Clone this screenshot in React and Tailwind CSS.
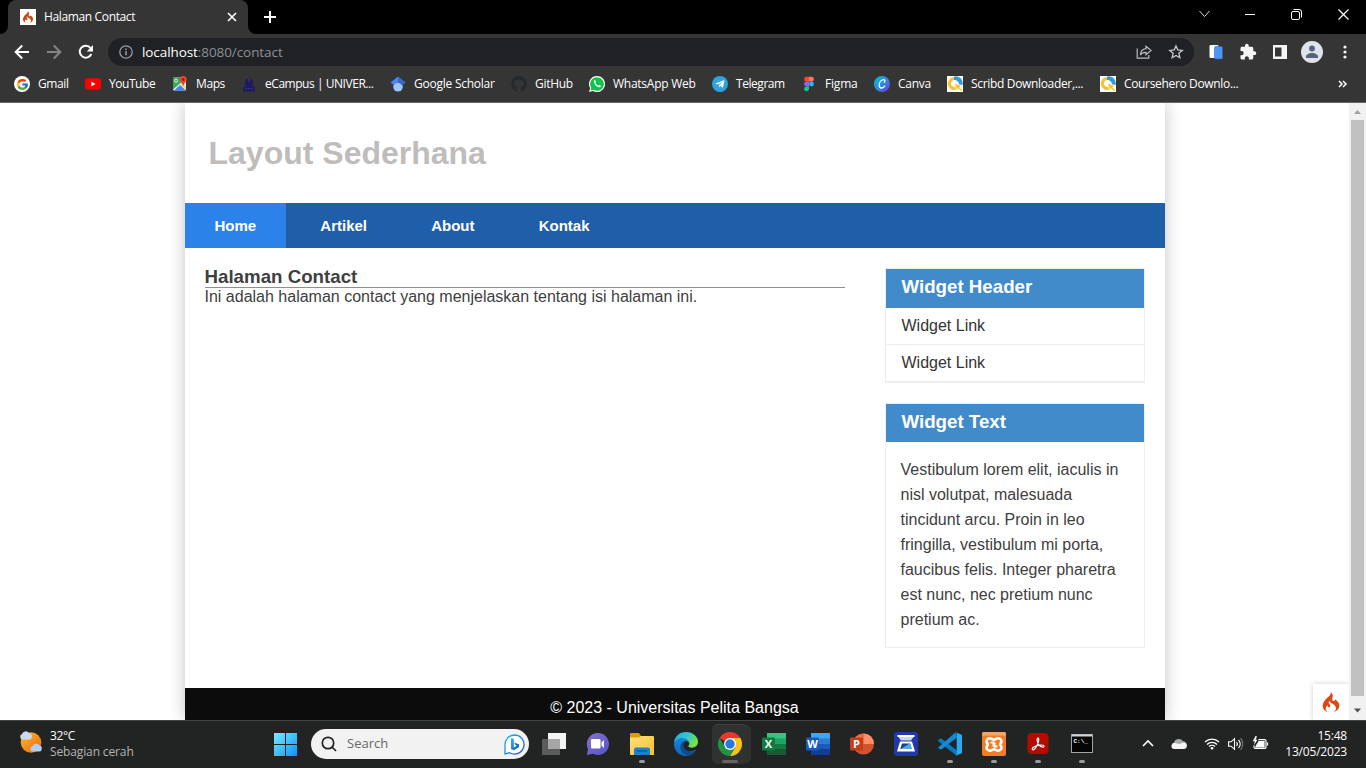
import React from "react";
import { FcGoogle } from "react-icons/fc";
import { FaGithub, FaTelegramPlane } from "react-icons/fa";
import { SiCodeigniter } from "react-icons/si";
import { MdExtension } from "react-icons/md";

const ui = "font-['Open_Sans','Noto_Sans',sans-serif]";
const arial = "font-['Liberation_Sans',Arial,sans-serif]";

const YouTube = () => (
  <svg width="16" height="16" viewBox="0 0 16 16"><rect y="2.2" width="16" height="11.6" rx="3" fill="#f00" /><path d="M6.3 5.6v4.8l4.2-2.4z" fill="#fff" /></svg>
);
const Maps = () => (
  <svg width="16" height="16" viewBox="0 0 16 16">
    <rect x="1" y="1.5" width="13" height="13" rx="1" fill="#e8eaed" />
    <path d="M1 2.5a1 1 0 0 1 1-1h7v5L1 13.500z" fill="#34a853" />
    <path d="M2 14.500 8 9l6 5.500z" fill="#4285f4" />
    <path d="m8 8 2-1.500L14 11v2.500z" fill="#fbd85d" />
    <circle cx="4" cy="4.700" r="1.500" fill="none" stroke="#e6f4ea" />
    <path d="M11.200 0a3.500 3.500 0 0 0-3.500 3.500c0 2.500 2.800 3.400 3.500 7 .7-3.600 3.500-4.500 3.500-7A3.500 3.500 0 0 0 11.200 0z" fill="#ea4335" />
    <circle cx="11.200" cy="3.500" r="1.200" fill="#7a1f16" />
  </svg>
);
const Campus = () => (
  <svg width="16" height="16" viewBox="0 0 16 16">
    <path d="M8 1.500 12 4.500v5l1.500 1.500.5 4.500H2L2.500 11 4 9.500v-5z" fill="#1d1c5c" />
    <path d="M5 6.500h6M4.500 9.500h7M3.500 12.500h9" stroke="#2b2b80" />
    <circle cx="8" cy="8" r="2.200" fill="none" stroke="#14144c" />
    <path d="M8 2.500v3" stroke="#8c2a3a" strokeWidth="1.300" />
  </svg>
);
const Scholar = () => (
  <svg width="16" height="16" viewBox="0 0 16 16">
    <circle cx="8" cy="10.800" r="4.800" fill="#a0c3ff" />
    <path d="M8 .5.500 6.500 4 9.300a4.500 4.500 0 0 1 8 0l3.500-2.800z" fill="#4f86e8" />
    <path d="M8 .5v6.300a4.500 4.500 0 0 1 4 2.500l3.500-2.800z" fill="#3667c9" />
  </svg>
);
const Figma = () => (
  <svg width="16" height="16" viewBox="0 0 16 16">
    <path d="M5.500.8H8v4.800H5.500a2.400 2.400 0 0 1 0-4.800z" fill="#f24e1e" />
    <path d="M8 .8h2.500a2.400 2.400 0 0 1 0 4.800H8z" fill="#ff7262" />
    <path d="M5.500 5.600H8v4.800H5.500a2.400 2.400 0 0 1 0-4.800z" fill="#a259ff" />
    <circle cx="10.500" cy="8" r="2.400" fill="#1abcfe" />
    <path d="M5.500 10.400H8v2.400a2.450 2.450 0 1 1-2.500-2.400z" fill="#0acf83" />
  </svg>
);
const Canva = () => (
  <svg width="16" height="16" viewBox="0 0 16 16">
    <defs><linearGradient id="cv" x1="0" y1="0" x2="1" y2="1"><stop offset="0" stopColor="#00c4cc" /><stop offset=".5" stopColor="#2a8fdc" /><stop offset="1" stopColor="#7d2ae8" /></linearGradient></defs>
    <circle cx="8" cy="8" r="8" fill="url(#cv)" />
    <path d="M10.300 6.200c1.200-1 .6-2.600-.9-2.500C6.800 4 5.300 6.700 5.200 9c0 1.900 1 3.100 2.500 3 1.300 0 2.400-.9 3.100-2" fill="none" stroke="#fff" strokeWidth="1.300" strokeLinecap="round" />
  </svg>
);
const Down = () => (
  <svg width="16" height="16" viewBox="0 0 16 16">
    <path d="M0 0h16v16H0z" fill="#fff" />
    <path d="M7 2.500A5 5 0 1 0 9 12.200" fill="none" stroke="#fbc02d" strokeWidth="3" />
    <path d="M7 .5A7 7 0 0 1 15.500 9l-3.500-.500A4.500 4.500 0 0 0 7 4z" fill="#2f9be0" />
    <path d="m7.500 7 7.500 3-2.500 1.300 3 3-1.300 1.300-3-3L10 15z" fill="#fbc02d" stroke="#fff" strokeWidth=".6" />
  </svg>
);
const Gmail = () => <span className="flex size-4 items-center justify-center rounded-full bg-white"><FcGoogle size={13} /></span>;
const WhatsApp = () => (
  <svg width="16" height="16" viewBox="0 0 16 16">
    <path d="M8 0a8 8 0 0 0-6.800 12.200L0 16l4-1.100A8 8 0 1 0 8 0z" fill="#fff" />
    <path d="M8 1.200a6.800 6.800 0 0 0-5.700 10.600l-.7 2.600 2.700-.7A6.800 6.800 0 1 0 8 1.200z" fill="#0fc34b" />
    <path d="M5.600 4.100c-1.300.8-.8 2.700.4 4.300 1.500 2 3.700 3.500 5.100 2.700.8-.5.900-1.100.7-1.400L10.200 8.800l-.9.900C8 9.200 7 8.200 6.400 7l.6-.9-.7-1.900z" fill="#fff" />
  </svg>
);
const Telegram = () => <span className="flex size-4 items-center justify-center rounded-full bg-[#2ea3de] pr-px text-white"><FaTelegramPlane size={10} /></span>;
const GitHub = () => <FaGithub size={16} color="#24292e" />;

const bookmarks = [
  [Gmail, "Gmail", "w-[71px]", "tracking-[-0.4px]"],
  [YouTube, "YouTube", "w-[87px]", "tracking-[-0.45px]"],
  [Maps, "Maps", "w-[69px]", "tracking-[-0.4px]"],
  [Campus, "eCampus | UNIVER...", "w-[149px]", "tracking-[-0.46px]"],
  [Scholar, "Google Scholar", "w-[121px]", "tracking-[-0.24px]"],
  [GitHub, "GitHub", "w-[78px]", "tracking-[-0.3px]"],
  [WhatsApp, "WhatsApp Web", "w-[123px]", "tracking-[-0.26px]"],
  [Telegram, "Telegram", "w-[89px]", "tracking-[-0.45px]"],
  [Figma, "Figma", "w-[73px]", "tracking-[-0.2px]"],
  [Canva, "Canva", "w-[73px]", "tracking-[-0.3px]"],
  [Down, "Scribd Downloader,...", "w-[153px]", "tracking-[-0.33px]"],
  [Down, "Coursehero Downlo...", "w-[160px]", "tracking-[-0.34px]"],
];

function Browser() {
  return (
    <header className={`${ui} text-[12px] text-white`}>
      <div className="flex h-[34px] bg-black">
        <div className="flex w-2 items-end bg-[#353535]"><div className="h-[34px] w-2 rounded-br-lg bg-black" /></div>
        <div className="h-[34px] bg-black">
          <div className="flex h-[34px] w-60 items-center rounded-t-lg bg-[#353535] pl-3">
            <span className="flex size-4 items-center justify-center bg-white"><SiCodeigniter size={12} color="#c9440f" /></span>
            <span className="ml-2 w-[182px] tracking-[-0.36px] whitespace-nowrap">Halaman Contact</span>
            <svg width="12" height="12" viewBox="0 0 12 12" stroke="#fff" strokeWidth="1.600"><path d="m2 2 8 8M10 2l-8 8" /></svg>
          </div>
        </div>
        <div className="w-2 bg-[#353535]"><div className="h-[34px] w-2 rounded-bl-lg bg-black" /></div>
        <svg className="mt-[10px] ml-[7px]" width="14" height="14" viewBox="0 0 14 14" stroke="#fff" strokeWidth="2"><path d="M7 1v12M1 7h12" /></svg>
        <div className="ml-auto flex h-7 items-center pr-[17px]">
          <svg className="mr-[35px]" width="12" height="12" viewBox="0 0 12 12" fill="none" stroke="#ddd"><path d="m1.500 3 5 5.500 5-5.500" /></svg>
          <svg className="mr-9" width="10" height="10" viewBox="0 0 10 10" stroke="#fff"><path d="M0 5.500h10" /></svg>
          <svg className="mr-9" width="11" height="11" viewBox="0 0 11 11" fill="none" stroke="#fff"><rect x=".5" y="2.500" width="8" height="8" rx="1.500" /><path d="M2.500.5h5.500a2.500 2.500 0 0 1 2.500 2.500v5.500" /></svg>
          <svg width="11" height="11" viewBox="0 0 11 11" stroke="#fff" strokeWidth="1.200"><path d="m.5.5 10 10M10.500.5l-10 10" /></svg>
        </div>
      </div>
      <div className="flex h-9 items-center bg-[#353535] pl-[14px]">
        <svg width="16" height="16" viewBox="0 0 16 16" fill="none" stroke="#fff" strokeWidth="2"><path d="M15 8H2M8.200 1.500 1.700 8l6.500 6.500" /></svg>
        <svg className="ml-4" width="16" height="16" viewBox="0 0 16 16" fill="none" stroke="#858585" strokeWidth="2"><path d="M1 8h13M7.800 1.500 14.300 8l-6.500 6.500" /></svg>
        <svg className="ml-4" width="16" height="16" viewBox="0 0 16 16" fill="none" stroke="#fff" strokeWidth="2"><path d="M13.300 10A6 6 0 1 1 12.500 4L14 5.800" /><path d="M15 1v6.500H8.800z" fill="#fff" stroke="none" /></svg>
        <div className="ml-[14px] flex h-7 w-[1086px] items-center rounded-full bg-[#202124] pl-[11px]">
          <svg width="14" height="14" viewBox="0 0 14 14" fill="none" stroke="#9aa0a6" strokeWidth="1.300"><circle cx="7" cy="7" r="6.200" /><path d="M7 6v4.300M7 3.500V5" strokeWidth="1.500" /></svg>
          <span className="ml-[9px] text-[13.5px] tracking-[-0.08px]">localhost<span className="text-[#8b9095]">:8080/contact</span></span>
          <svg className="ml-auto" width="16" height="16" viewBox="0 0 16 16" fill="none" stroke="#b9bcc0" strokeWidth="1.200"><path d="M1.200 4.500v9.700h11.600V11" /><path d="M10 2.200 15 6.500l-5 4.300V8.300C7.500 8.200 5.600 9 4.300 11c.3-3.200 2.200-6 5.700-6.400z" /></svg>
          <svg className="mr-[10px] ml-4" width="16" height="16" viewBox="0 0 16 16" fill="none" stroke="#c8cace" strokeWidth="1.300"><path d="m8 1.900 1.750 4.100 4.500.4-3.400 2.950 1 4.350L8 11.400l-3.850 2.300 1-4.350L1.750 6.400l4.500-.4z" /></svg>
        </div>
        <svg className="ml-[14px]" width="16" height="16" viewBox="0 0 16 16"><rect x="1.500" y="1" width="9" height="13" rx="1.300" fill="#fff" /><rect x="6.500" y="2.500" width="8" height="12.500" rx="1.300" fill="#4c97f5" stroke="#2a5ea8" strokeWidth=".5" /></svg>
        <MdExtension className="ml-[15px]" size={18} color="#f5f5f5" />
        <svg className="ml-4" width="14" height="14" viewBox="0 0 14 14"><path d="M0 0h14v14H0z" fill="#f5f5f5" /><path d="M2 2.500h6.500v9H2z" fill="#353535" /></svg>
        <svg className="ml-[14px]" width="22" height="22" viewBox="0 0 22 22"><circle cx="11" cy="11" r="11" fill="#dfe3ea" /><circle cx="11" cy="7.500" r="2.900" fill="#56627a" /><path d="M5 17v-1.500c0-2 3.500-3.500 6-3.500s6 1.500 6 3.500V17z" fill="#56627a" /></svg>
        <svg className="ml-5" width="4" height="14" viewBox="0 0 4 14" fill="#f5f5f5"><circle cx="2" cy="2" r="1.600" /><circle cx="2" cy="7" r="1.600" /><circle cx="2" cy="12" r="1.600" /></svg>
      </div>
      <div className="flex h-8 items-start bg-[#353535] pl-[14px]">
        {bookmarks.map(([Icon, label, w, t]) => (
          <div key={label} className={`flex h-7 shrink-0 items-center gap-2 whitespace-nowrap ${w}`}><Icon /><span className={t}>{label}</span></div>
        ))}
        <svg className="mt-[10px] ml-[78px]" width="10" height="8" viewBox="0 0 10 8" fill="none" stroke="#fff" strokeWidth="1.500"><path d="m1 1 3 3-3 3M5 1l3 3-3 3" /></svg>
      </div>
      <div className="h-px bg-[#666]" />
    </header>
  );
}

function Site() {
  return (
    <div className={`${arial} flex h-[617px] overflow-hidden bg-white text-[#404040]`}>
      <div className="flex flex-1 justify-start overflow-hidden pl-[184.5px]">
        <div className="flex h-full w-[980px] flex-col bg-white shadow-[0_0_16px_rgba(0,0,0,0.24)]">
          <h1 className="h-[100px] pt-8 pl-6 text-[32px] leading-[37px] font-bold text-[#bfbcbc]">Layout Sederhana</h1>
          <nav className="flex h-[45px] items-center gap-[4.17px] bg-[#1f5faa] text-[15px] leading-[17px] font-bold text-white">
            <a className="flex h-full items-center bg-[#2b83ea] px-[30px]">Home</a>
            <a className="px-[30px]">Artikel</a>
            <a className="px-[30px]">About</a>
            <a className="px-[30px]">Kontak</a>
          </nav>
          <div className="flex h-[440px] justify-between p-5">
            <main className="w-[640px]">
              <h3 className="-mt-[2px] h-[22px] border-b border-[#8f8f8f] text-[18.72px] leading-[21px] font-bold">Halaman Contact</h3>
              <p className="text-[16px] leading-[18px]">Ini adalah halaman contact yang menjelaskan tentang isi halaman ini.</p>
            </main>
            <aside className="flex w-[260px] flex-col gap-5">
              <section className="border border-[#eee]">
                <h3 className="h-[39px] bg-[#428bca] pl-4 text-[18.72px] leading-[36px] font-bold text-white">Widget Header</h3>
                <div className="h-[37px] border-b border-[#eee] pl-4 leading-[35px] text-[#333]">Widget Link</div>
                <div className="h-[37px] border-b border-[#eee] pl-4 leading-[35px] text-[#333]">Widget Link</div>
              </section>
              <section className="border border-[#eee]">
                <h3 className="h-[38px] bg-[#428bca] pl-4 text-[18.72px] leading-[36px] font-bold text-white">Widget Text</h3>
                <p className="p-[15px] leading-[25px]">Vestibulum lorem elit, iaculis in nisl volutpat, malesuada tincidunt arcu. Proin in leo fringilla, vestibulum mi porta, faucibus felis. Integer pharetra est nunc, nec pretium nunc pretium ac.</p>
              </section>
            </aside>
          </div>
          <footer className="h-8 bg-[#0c0c0c] pt-[11px] text-center leading-[18px] text-white">© 2023 - Universitas Pelita Bangsa</footer>
        </div>
        <div className="mt-auto ml-auto flex size-9 shrink-0 items-center justify-center bg-white shadow-[0_0_5px_rgba(0,0,0,0.2)]"><SiCodeigniter size={20} color="#dd4814" /></div>
      </div>
      <div className="flex w-[17px] flex-col items-center bg-[#f1f1f1]">
        <svg width="17" height="17" viewBox="0 0 17 17"><path d="M5 11h7L8.500 7z" fill="#a3a3a3" /></svg>
        <div className="h-[576px] w-[13px] bg-[#c1c1c1]" />
        <svg className="mt-[6px]" width="17" height="17" viewBox="0 0 17 17"><path d="M5 6.500h7l-3.500 4z" fill="#505050" /></svg>
      </div>
    </div>
  );
}

const Folder = () => (
  <svg width="24" height="24" viewBox="0 0 24 24"><defs><linearGradient id="fo" x1="0" y1="0" x2="1" y2="1"><stop offset="0" stopColor="#ffe082" /><stop offset="1" stopColor="#fbbf24" /></linearGradient></defs><path d="M0 2a1 1 0 0 1 1-1h8l2 3h12v6H0z" fill="#dd9b08" /><path d="M0 5.500h9L11 4h12a1 1 0 0 1 1 1v18H1a1 1 0 0 1-1-1z" fill="url(#fo)" /><path d="M4 23v-5.500a2 2 0 0 1 2-2h12a2 2 0 0 1 2 2V23z" fill="#1583cf" /><path d="M7 19h10" stroke="#0b5a99" strokeWidth="1.500" /></svg>
);
const Edge = () => (
  <svg width="24" height="24" viewBox="0 0 24 24"><defs><linearGradient id="e1" x1="0" y1="0" x2="1" y2=".5"><stop offset="0" stopColor="#28a6e5" /><stop offset=".55" stopColor="#36c6d0" /><stop offset="1" stopColor="#72e63f" /></linearGradient><linearGradient id="e2" x1="0" y1="0" x2="0" y2="1"><stop offset="0" stopColor="#1588d9" /><stop offset="1" stopColor="#0d65bc" /></linearGradient></defs><path d="M0 12C0 4.500 5.500 0 12 0c7 0 12 4.800 12 9.600 0 4-2.900 6.200-6 6.200-2.300 0-3.700-.8-3.700-1.700 0-.7 1-.8 1-2.600 0-2-2.400-4.500-6.200-4.500C4.500 7 0 9 0 12z" fill="url(#e1)" /><path d="M0 12c.3-3.600 4-6 7.800-6 4.800 0 7.500 2.800 7.500 5.500-.7-1.600-2-2.400-3.500-2.400-3 0-3.800 2.700-3.800 4.600 0 4.800 5 7 10 5.600l4-1.500C20 22 16 24 12 24 5 24 0 18.500 0 12z" fill="url(#e2)" /><path d="M11.800 9c-5 0-6.800 6-4.300 10 1.600 2.800 3.900 4.500 6.700 4.800 3-.3 6-2.300 7.800-5.400C16 21 9.500 18.500 9.500 13c0-1.500.8-3.200 2.300-4z" fill="#104b91" /></svg>
);
const Chrome = () => (
  <svg width="24" height="24" viewBox="0 0 24 24"><path d="M12 12 1.600 6A12 12 0 0 1 22.400 6z" fill="#e33b2e" /><path d="M12 12V6h10.400A12 12 0 0 1 12 24l5.200-9z" fill="#fbc116" /><path d="M12 12 6.800 15 1.600 6A12 12 0 0 0 12 24l5.200-9z" fill="#229342" /><circle cx="12" cy="12" r="6" fill="#fff" /><circle cx="12" cy="12" r="4.700" fill="#2877e8" /></svg>
);
const Office = ({ a, b, c, d, e, letter, round }) => (
  <svg width="24" height="24" viewBox="0 0 24 24">
    {round ? <><circle cx="13.500" cy="12" r="10.500" fill={d} /><path d="M13.500 1.500A10.500 10.500 0 0 1 24 12H13.500z" fill={a} /><path d="M13.500 1.500A10.500 10.500 0 0 0 3 12h10.500z" fill={b} /></> : <><path d="M5 1h19v6H5z" fill={a} /><path d="M5 6.500h19V12H5z" fill={b} /><path d="M5 12h19v5.500H5z" fill={c} /><path d="M5 17.500h19V23H5z" fill={d} /></>}
    <rect x="0" y="5.500" width="13" height="13" rx="1" fill={e} /><text x="6.500" y="16" textAnchor="middle" fontSize="11" fontWeight="700" fontFamily="Open Sans, sans-serif" fill="#fff">{letter}</text>
  </svg>
);
const Scanner = () => (
  <svg width="24" height="24" viewBox="0 0 24 24"><rect width="24" height="24" rx="3" fill="#2138aa" /><path d="M3.500 3.500h17l-3.500 5H7z" fill="#c9d4f0" /><path d="M3.500 3h17v2h-17z" fill="#fff" /><path d="M6 9.500h12l3 10H3z" fill="#fff" /><path d="M8 11.500h8l1.800 5.500H6.200z" fill="#1d3e94" /><path d="m6.500 17 9.300-5.500 2 5.500z" fill="#55a8e8" /></svg>
);
const Code = () => (
  <svg width="24" height="24" viewBox="0 0 24 24"><path d="M0 8.200 1.700 6.700l2 .1L19 18.500V24L1.200 9.900z" fill="#0879c4" /><path d="M0 15.800 17.500.3 19 5.500 3.700 17.200l-2 .1z" fill="#118bd4" /><path d="M17.500 0 24 3v18l-6.500 3c.9-.2 1.200-.8 1.200-1.500v-21c0-.8-.4-1.300-1.200-1.500z" fill="#29aaf2" /></svg>
);
const Xampp = () => (
  <svg width="24" height="24" viewBox="0 0 24 24"><rect width="24" height="24" rx="2" fill="#f47c24" /><path d="M0 2a2 2 0 0 1 2-2h20a2 2 0 0 1 2 2v1.500H0z" fill="#f9a564" /><path d="M8 6.300c2 0 2.600 1.500 4 1.500s2-1.500 4-1.500c2.200 0 3.500 1.700 3.500 3.200 0 1.400-1.200 1.800-1.200 3s1.200 1.600 1.200 3c0 1.500-1.300 3.200-3.500 3.200-2 0-2.600-1.500-4-1.500s-2 1.500-4 1.500c-2.200 0-3.500-1.700-3.500-3.200 0-1.400 1.200-1.800 1.200-3s-1.200-1.600-1.200-3C4.500 8 5.800 6.300 8 6.300z" fill="none" stroke="#fff" strokeWidth="2.600" /><path d="M8.500 10.500h3v4M15.500 14.500h-3v-4" fill="none" stroke="#fff" strokeWidth="2" /></svg>
);
const Acrobat = () => (
  <svg width="24" height="24" viewBox="0 0 24 24"><rect x="1.500" y="1" width="21" height="21" rx="4" fill="#b30b00" /><path d="M6.500 17.500c-1.200-1.300 2-3.300 5-4s6.500-.8 6.500.7c0 1.700-3 .9-5-1.200S10.500 6 12 6s.5 4.800-1.200 8-3.400 4.400-4.300 3.500z" fill="none" stroke="#fff" strokeWidth="1.200" /></svg>
);
const Terminal = () => (
  <svg width="24" height="24" viewBox="0 0 24 24"><rect x="1.500" y="2.500" width="21" height="18" fill="#050505" stroke="#a4a4a4" /><path d="M2 3.500h20" stroke="#cfd4dc" strokeWidth="2" /><text x="3.500" y="11" fontSize="6" fontWeight="700" fontFamily="Liberation Mono, monospace" fill="#fff">C:\_</text></svg>
);
const TaskView = () => (
  <svg width="24" height="24" viewBox="0 0 24 24"><path d="M6 1h18v16H6z" fill="#f4f4f4" /><path d="M0 7h18v16H0z" fill="#5b5b5b" /><path d="M6 7h12v10H6z" fill="#a6a6a6" /></svg>
);
const Chat = () => (
  <svg width="24" height="24" viewBox="0 0 24 24"><defs><linearGradient id="ch" x1="0" y1="0" x2="1" y2="1"><stop offset="0" stopColor="#8b70c8" /><stop offset="1" stopColor="#5055c8" /></linearGradient></defs><path d="M12 1a11 11 0 1 1-5 20.800L.8 23l1.200-6A11 11 0 0 1 12 1z" fill="url(#ch)" /><rect x="5" y="7" width="9.500" height="9.500" rx="1.300" fill="#fff" /><path d="m15.500 10.500 2.500-2.500v8l-2.500-2.500z" fill="#fff" /></svg>
);

const apps = [
  [TaskView], [Chat], [Folder, {}, "dot"], [Edge], [Chrome, {}, "active"],
  [Office, { a: "#33c481", b: "#21a366", c: "#107c41", d: "#185c37", e: "#107c41", letter: "X" }],
  [Office, { a: "#41a5ee", b: "#2b7cd3", c: "#185abd", d: "#103f91", e: "#185abd", letter: "W" }],
  [Office, { a: "#ff8f6b", b: "#ed6c47", d: "#d35230", e: "#c43e1c", letter: "P", round: true }],
  [Scanner], [Code, {}, "dot"], [Xampp, {}, "dot"], [Acrobat, {}, "dot"], [Terminal, {}, "dot"],
];

function Taskbar() {
  return (
    <footer className={`${ui} flex h-12 border-t border-[#434544] bg-[#222423] text-[12px] text-white`}>
      <svg className="mt-[9px] ml-[18px]" width="26" height="26" viewBox="0 0 26 26"><defs><linearGradient id="su" x1="0" y1="0" x2="1" y2="1"><stop offset="0" stopColor="#fbb829" /><stop offset="1" stopColor="#ec6b10" /></linearGradient></defs><circle cx="13" cy="12.500" r="10.300" fill="url(#su)" /><path d="M4 9.500a3 3 0 0 1 0-5.500 4 4 0 0 1 7-1 3.400 3.400 0 0 1 1 6.500z" fill="#c9d9f5" /><path d="M14 21.500a2.800 2.800 0 0 1 .5-5.200 4 4 0 0 1 7-1 3.200 3.200 0 0 1 0 6.200z" fill="#b7ccf1" /></svg>
      <div className="mt-[7px] ml-[6px] w-[223px] leading-4"><div className="tracking-[-0.35px]">32°C</div><div className="tracking-[-0.13px] text-[#b5b5b5]">Sebagian cerah</div></div>
      <svg className="mt-3 ml-px" width="23" height="23" viewBox="0 0 23 23"><defs><linearGradient id="wi" x1="0" y1="0" x2="1" y2="1"><stop offset="0" stopColor="#7ceaff" /><stop offset="1" stopColor="#0a93f5" /></linearGradient></defs><path d="M0 0h11v11H0zM12 0h11v11H12zM0 12h11v11H0zM12 12h11v11H12z" fill="url(#wi)" /></svg>
      <div className="mt-2 ml-[14px] flex h-[30px] w-[218px] items-center rounded-full bg-[#f2f2f2] pr-1 pl-[10px]">
        <svg width="16" height="16" viewBox="0 0 16 16" fill="none" stroke="#222" strokeWidth="1.700"><circle cx="7" cy="7" r="5.700" /><path d="m11 11 4 4" /></svg>
        <span className="ml-[10px] text-[13px] text-[#666]">Search</span>
        <svg className="ml-auto" width="21" height="21" viewBox="0 0 21 21"><defs><linearGradient id="bi" x1="0" y1="0" x2="1" y2="1"><stop offset="0" stopColor="#29b9f2" /><stop offset="1" stopColor="#174fc4" /></linearGradient></defs><path d="M10.500 1a9.500 9.500 0 1 1-4.800 17.700L1 20V10.500A9.500 9.500 0 0 1 10.500 1z" fill="#fff" stroke="url(#bi)" strokeWidth="1.300" /><path d="m7 4 2.800 1v8.500l3-1.700-1.600-.8-1-2.600 4.800 1.900v2.800l-5.200 3.200L7 15z" fill="url(#bi)" /></svg>
      </div>
      <div className="ml-[3px] flex">
        {apps.map(([Icon, props, state], i) => (
          <div key={i} className="flex w-11 flex-col items-center">
            <div className={`mt-[3px] flex h-10 w-9 flex-col items-center pt-2 ${state === "active" ? "rounded-md border-t border-[#414342] bg-[#303231] !pt-[7px] shadow-[4px_0_0_-1px_#303231]" : ""}`}>
              <Icon {...props} />
              {state && <span className={`mt-1 h-[3px] shrink-0 rounded-full ${state === "active" ? "w-4 bg-[#69635f]" : "w-[6px] bg-[#999]"}`} />}
            </div>
          </div>
        ))}
      </div>
      <svg className="mt-[18px] ml-[38px]" width="12" height="9" viewBox="0 0 12 9" fill="none" stroke="#fff" strokeWidth="1.600"><path d="m1 7 5-5 5 5" /></svg>
      <svg className="mt-[17px] ml-[17px]" width="17" height="12" viewBox="0 0 17 12"><path d="M3.500 11a3.400 3.400 0 0 1-.5-6.500 5 5 0 0 1 9-1.300 4 4 0 0 1 1 7.800z" fill="#aaa" /><path d="M3 11a3 3 0 0 1 1-6l4 1 5-1.500A3.300 3.300 0 0 1 13 11z" fill="#f5f5f5" /></svg>
      <svg className="mt-[16px] ml-4" width="16" height="13" viewBox="0 0 16 13" fill="none" stroke="#fff" strokeWidth="1.300"><path d="M1 5a10 10 0 0 1 14 0M3 7.500a7 7 0 0 1 10 0M5 9.500a4.300 4.300 0 0 1 6 0" /><circle cx="8" cy="11.300" r="1.300" fill="#fff" stroke="none" /></svg>
      <svg className="mt-[16px] ml-2" width="16" height="14" viewBox="0 0 16 14" fill="none" stroke="#fff" strokeWidth="1.100"><path d="M.6 4.800h2.600L6.500 1.700v10.600L3.200 9.200H.6zM8.500 5a3 3 0 0 1 0 4M10.500 3a5.500 5.500 0 0 1 0 8" /><path d="M12.500 1.200a8.500 8.500 0 0 1 0 11.600" stroke="#777" /></svg>
      <svg className="mt-[15px] ml-2" width="17" height="15" viewBox="0 0 17 15" fill="none" stroke="#fff" strokeWidth="1.200"><path d="M6.500 3.600h6a1.500 1.500 0 0 1 1.500 1.500v5.800a1.500 1.500 0 0 1-1.500 1.500h-9A1.500 1.500 0 0 1 2 10.900V9.500" /><path d="M4.500 9.500 7 5.500h5v5.300H4z" fill="#fff" /><path d="M15.500 6.500v3" /><path d="M3.500 0 .8 5.200h2L2 9l3.500-5.300H3.600L5 .5z" fill="#fff" stroke="none" /></svg>
      <div className="mt-[7px] mr-[19px] ml-auto text-right leading-4 tracking-[-0.2px]"><div>15:48</div><div>13/05/2023</div></div>
    </footer>
  );
}

export default function App() {
  return <div className="flex h-[768px] w-[1366px] flex-col overflow-hidden"><Browser /><Site /><Taskbar /></div>;
}
